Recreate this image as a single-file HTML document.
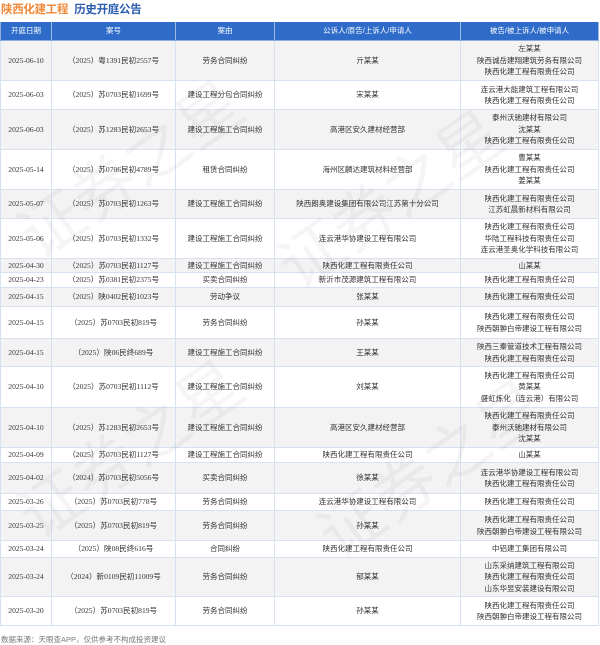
<!DOCTYPE html>
<html><head><meta charset="utf-8"><style>
*{margin:0;padding:0;box-sizing:border-box}
body{width:600px;height:644px;background:#fff;font-family:"Liberation Sans","Noto Sans CJK SC",sans-serif;position:relative;overflow:hidden;color:#333}
.t{position:absolute;left:1px;top:1px;font-size:11.5px;font-weight:bold;letter-spacing:-0.3px}
.t .a{color:#f0883a}.t .b{color:#2a5db0;margin-left:6px}
.row{position:absolute;left:0;width:599px;display:flex;border-bottom:1px solid #d6e2ef;border-left:1px solid #d6e2ef}
.row div{border-right:1px solid #d6e2ef;display:flex;flex-direction:column;justify-content:center;align-items:center;text-align:center;font-size:7.5px;line-height:11.5px;white-space:nowrap}
.row div:nth-child(1){width:51px;font-family:"Liberation Serif","Noto Sans CJK SC",serif;font-size:7.6px}
.row div:nth-child(2){width:124px;font-family:"Liberation Serif","Noto Sans CJK SC",serif;font-size:7.6px}
.row div:nth-child(3){width:99px}.row div:nth-child(4){width:186px}.row div:nth-child(5){width:138px}
.g{background:#f3f3f3}
.h{background:#2f6cca;color:#fff;border-color:#8eaee0}
.h div{color:#fff;font-family:"Liberation Sans","Noto Sans CJK SC",sans-serif!important;font-size:7.5px!important;border-color:#9db8e4}
.f{position:absolute;left:1px;top:634px;font-size:7.5px;color:#777}
.wm{position:absolute;font-size:64px;color:rgba(0,0,0,0.04);transform:rotate(-35deg);font-family:"Noto Sans CJK SC",sans-serif;white-space:nowrap;pointer-events:none}
</style></head><body>
<div class="t"><span class="a">陕西化建工程</span><span class="b">历史开庭公告</span></div>
<div class="row h" style="top:22px;height:19px"><div>开庭日期</div><div>案号</div><div>案由</div><div>公诉人/原告/上诉人/申请人</div><div>被告/被上诉人/被申请人</div></div>
<div class="row g" style="top:41px;height:40px"><div>2025-06-10</div><div>（2025）粤1391民初2557号</div><div>劳务合同纠纷</div><div>亓某某</div><div><span>左某某</span><span>陕西诚岳建翔建筑劳务有限公司</span><span>陕西化建工程有限责任公司</span></div></div>
<div class="row" style="top:81px;height:29px"><div>2025-06-03</div><div>（2025）苏0703民初1699号</div><div>建设工程分包合同纠纷</div><div>宋某某</div><div><span>连云港大能建筑工程有限公司</span><span>陕西化建工程有限责任公司</span></div></div>
<div class="row g" style="top:110px;height:40px"><div>2025-06-03</div><div>（2025）苏1283民初2653号</div><div>建设工程施工合同纠纷</div><div>高港区安久建材经营部</div><div><span>泰州沃驰建材有限公司</span><span>沈某某</span><span>陕西化建工程有限责任公司</span></div></div>
<div class="row" style="top:150px;height:40px"><div>2025-05-14</div><div>（2025）苏0706民初4789号</div><div>租赁合同纠纷</div><div>海州区麟达建筑材料经营部</div><div><span>曹某某</span><span>陕西化建工程有限责任公司</span><span>姜某某</span></div></div>
<div class="row g" style="top:190px;height:29px"><div>2025-05-07</div><div>（2025）苏0703民初1263号</div><div>建设工程施工合同纠纷</div><div>陕西朗奥建设集团有限公司江苏第十分公司</div><div><span>陕西化建工程有限责任公司</span><span>江苏虹晨新材料有限公司</span></div></div>
<div class="row" style="top:219px;height:40px"><div>2025-05-06</div><div>（2025）苏0703民初1332号</div><div>建设工程施工合同纠纷</div><div>连云港华协建设工程有限公司</div><div><span>陕西化建工程有限责任公司</span><span>华陆工程科技有限责任公司</span><span>连云港圣奥化学科技有限公司</span></div></div>
<div class="row g" style="top:259px;height:14px"><div>2025-04-30</div><div>（2025）苏0703民初1127号</div><div>建设工程施工合同纠纷</div><div>陕西化建工程有限责任公司</div><div>山某某</div></div>
<div class="row" style="top:273px;height:15px"><div>2025-04-23</div><div>（2025）苏0381民初2375号</div><div>买卖合同纠纷</div><div>新沂市茂源建筑工程有限公司</div><div>陕西化建工程有限责任公司</div></div>
<div class="row g" style="top:288px;height:19px"><div>2025-04-15</div><div>（2025）陕0402民初1023号</div><div>劳动争议</div><div>张某某</div><div>陕西化建工程有限责任公司</div></div>
<div class="row" style="top:307px;height:32px"><div>2025-04-15</div><div>（2025）苏0703民初819号</div><div>劳务合同纠纷</div><div>孙某某</div><div><span>陕西化建工程有限责任公司</span><span>陕西朝翀白帝建设工程有限公司</span></div></div>
<div class="row g" style="top:339px;height:28px"><div>2025-04-15</div><div>（2025）陕06民终689号</div><div>建设工程施工合同纠纷</div><div>王某某</div><div><span>陕西三秦管道技术工程有限公司</span><span>陕西化建工程有限责任公司</span></div></div>
<div class="row" style="top:367px;height:41px"><div>2025-04-10</div><div>（2025）苏0703民初1112号</div><div>建设工程施工合同纠纷</div><div>刘某某</div><div><span>陕西化建工程有限责任公司</span><span>黄某某</span><span>盛虹炼化（连云港）有限公司</span></div></div>
<div class="row g" style="top:408px;height:40px"><div>2025-04-10</div><div>（2025）苏1283民初2653号</div><div>建设工程施工合同纠纷</div><div>高港区安久建材经营部</div><div><span>陕西化建工程有限责任公司</span><span>泰州沃驰建材有限公司</span><span>沈某某</span></div></div>
<div class="row" style="top:448px;height:15px"><div>2025-04-09</div><div>（2025）苏0703民初1127号</div><div>建设工程施工合同纠纷</div><div>陕西化建工程有限责任公司</div><div>山某某</div></div>
<div class="row g" style="top:463px;height:31px"><div>2025-04-02</div><div>（2024）苏0703民初5056号</div><div>买卖合同纠纷</div><div>徐某某</div><div><span>连云港华协建设工程有限公司</span><span>陕西化建工程有限责任公司</span></div></div>
<div class="row" style="top:494px;height:17px"><div>2025-03-26</div><div>（2025）苏0703民初778号</div><div>劳务合同纠纷</div><div>连云港华协建设工程有限公司</div><div>陕西化建工程有限责任公司</div></div>
<div class="row g" style="top:511px;height:30px"><div>2025-03-25</div><div>（2025）苏0703民初819号</div><div>劳务合同纠纷</div><div>孙某某</div><div><span>陕西化建工程有限责任公司</span><span>陕西朝翀白帝建设工程有限公司</span></div></div>
<div class="row" style="top:541px;height:17px"><div>2025-03-24</div><div>（2025）陕08民终616号</div><div>合同纠纷</div><div>陕西化建工程有限责任公司</div><div>中铝建工集团有限公司</div></div>
<div class="row g" style="top:558px;height:39px"><div>2025-03-24</div><div>（2024）新0109民初11009号</div><div>劳务合同纠纷</div><div>郁某某</div><div><span>山东采纳建筑工程有限公司</span><span>陕西化建工程有限责任公司</span><span>山东华昱安装建设有限公司</span></div></div>
<div class="row" style="top:597px;height:29px"><div>2025-03-20</div><div>（2025）苏0703民初819号</div><div>劳务合同纠纷</div><div>孙某某</div><div><span>陕西化建工程有限责任公司</span><span>陕西朝翀白帝建设工程有限公司</span></div></div>
<div class="f">数据来源：天眼查APP，仅供参考不构成投资建议</div>
<div class="wm" style="left:0px;top:120px">证券之星</div>
<div class="wm" style="left:260px;top:150px">证券之星</div>
<div class="wm" style="left:0px;top:400px">证券之星</div>
<div class="wm" style="left:300px;top:420px">证券之星</div>
</body></html>
